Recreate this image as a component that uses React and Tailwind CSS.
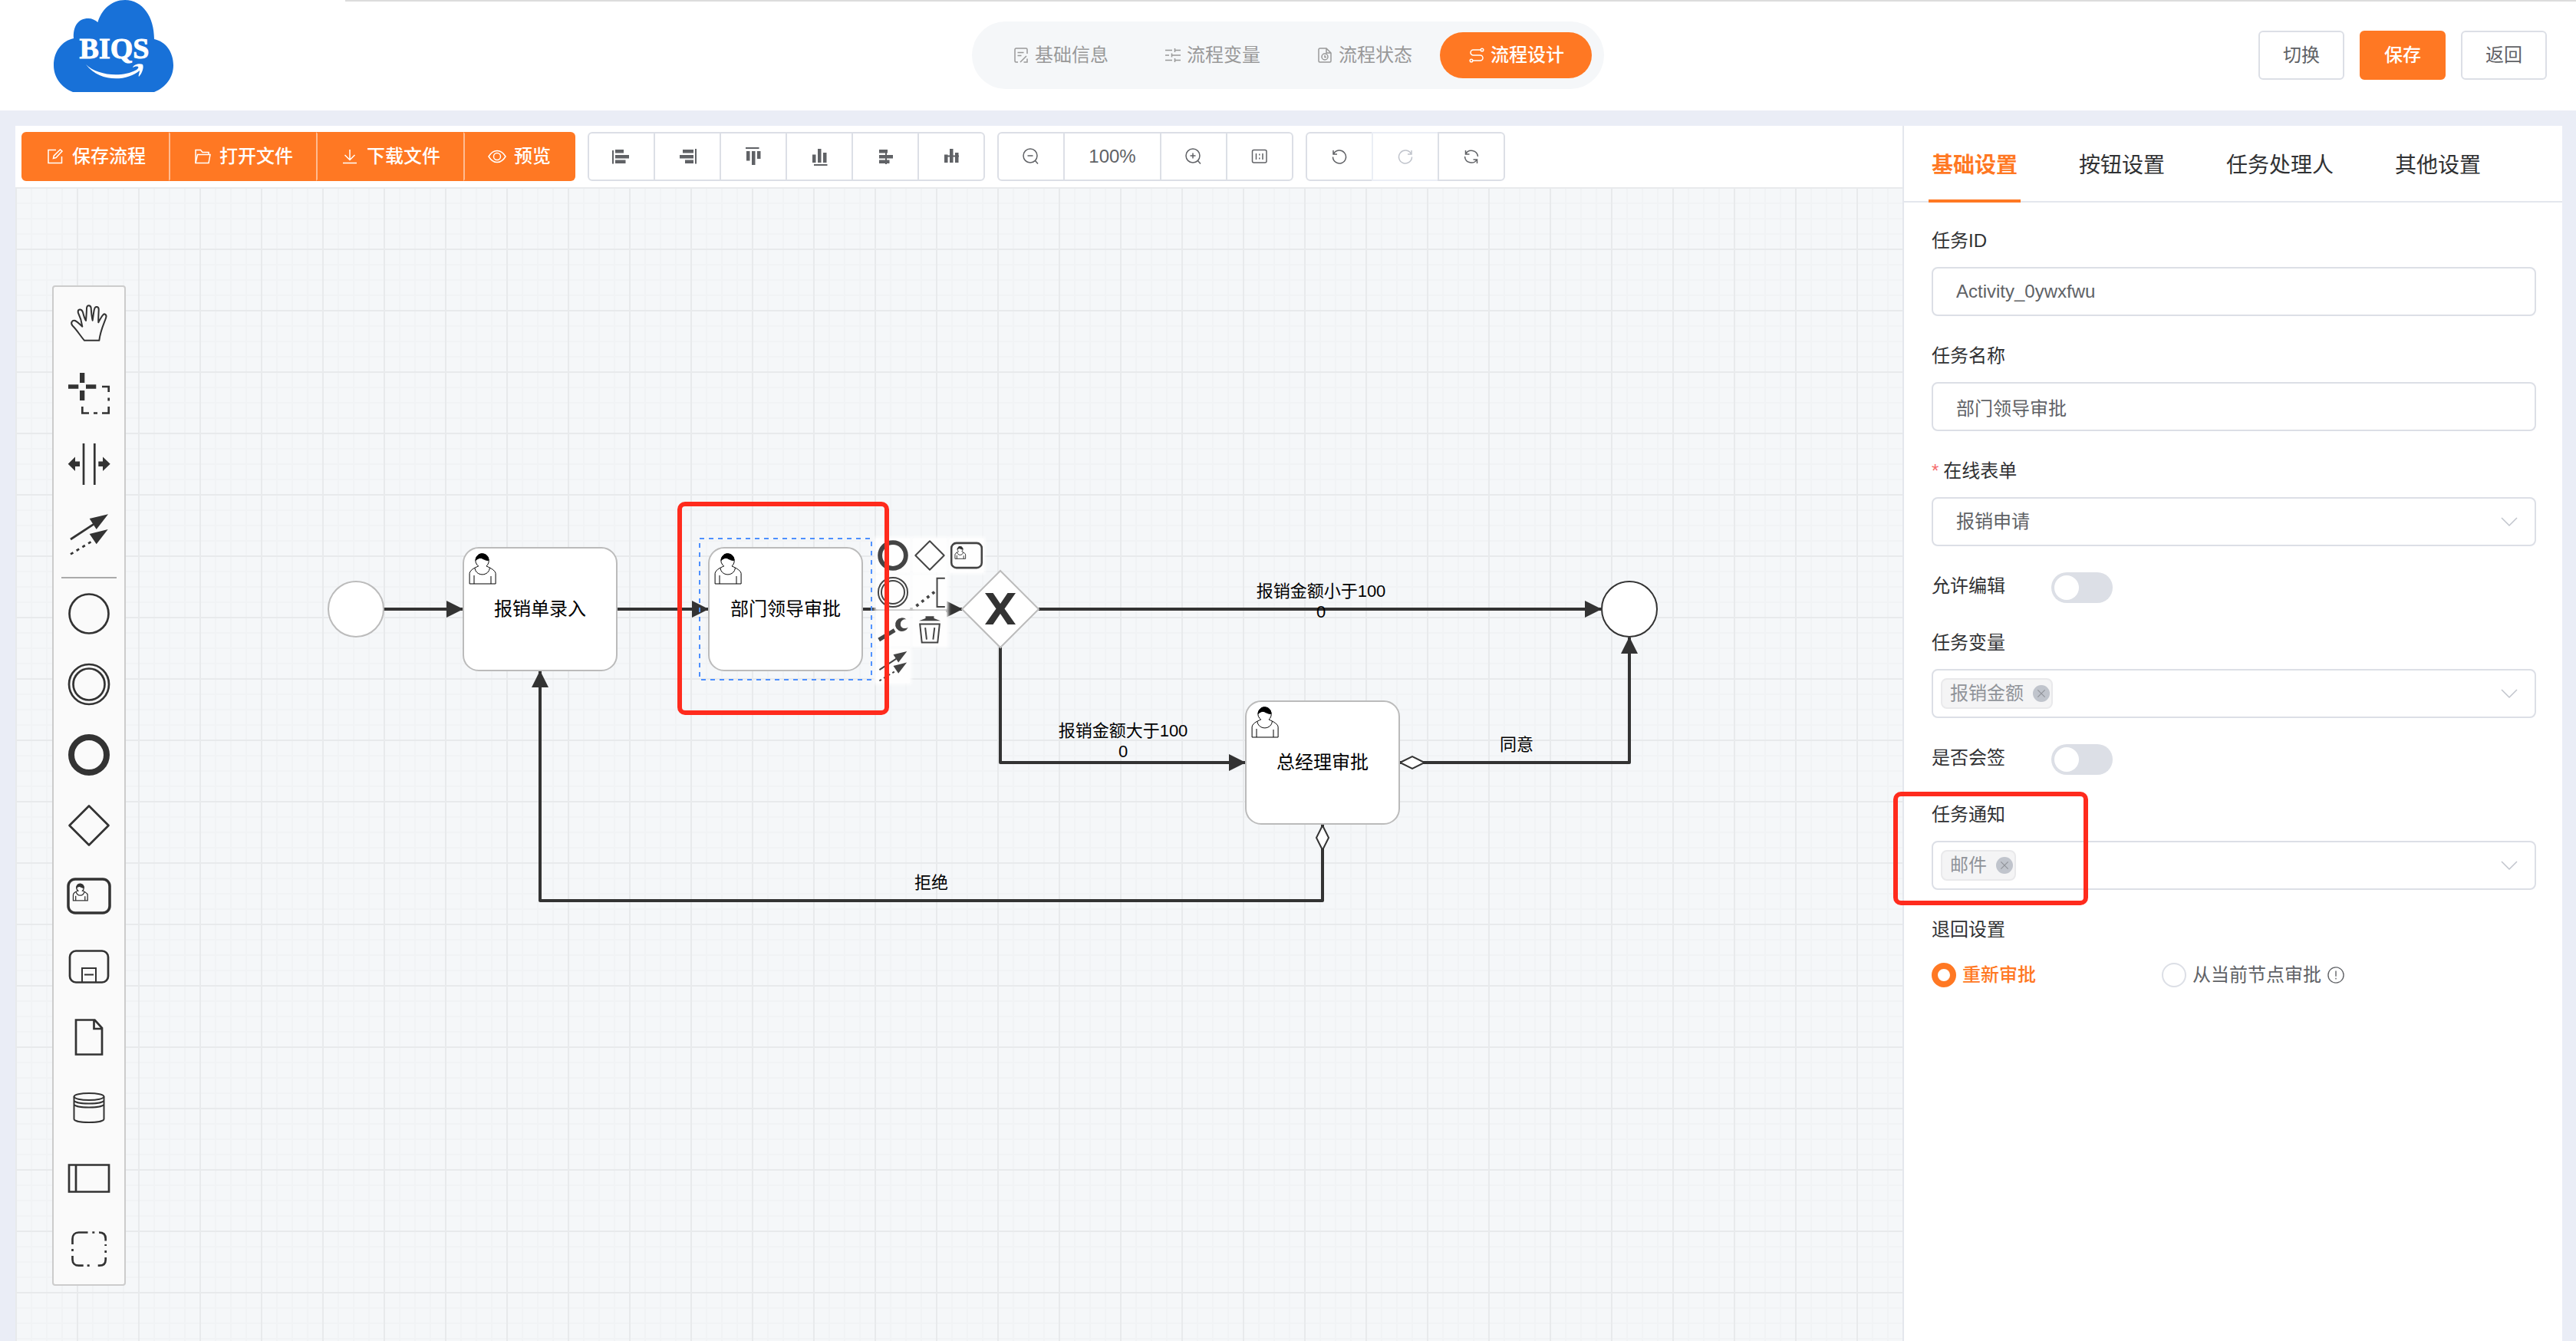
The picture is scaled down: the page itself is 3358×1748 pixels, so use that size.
import { useState } from 'react';
import clsx from 'clsx';

const Icon = ({ children, className = 'size-6', box = 24, stroke = 1.5 }) => (
  <svg
    viewBox={`0 0 ${box} ${box}`}
    className={clsx('shrink-0', className)}
    fill="none"
    stroke="currentColor"
    strokeWidth={stroke}
    aria-hidden="true"
  >
    {children}
  </svg>
);

const fill = { fill: 'currentColor', stroke: 'none' };

// small 24px icons for the header and toolbar
const icons = {
  info: (
    <>
      <path d="M20 10V4.500a1.500 1.500 0 0 0-1.500-1.500h-13A1.500 1.500 0 0 0 4 4.500v15A1.500 1.500 0 0 0 5.500 21H8" />
      <path d="M7.500 8.500h8M7.500 12.500h5M11 21l8-8M15.500 21H20v-4.500" />
    </>
  ),
  sliders: (
    <path d="M2 5.500h9M15 5.500h7M14.500 3v5M2 12h5M11 12h11M10.500 9.500v5M2 18.500h9M15 18.500h7M14.500 16v5" />
  ),
  status: (
    <>
      <path d="M14 3H5.500A1.500 1.500 0 0 0 4 4.500v15A1.500 1.500 0 0 0 5.500 21h13a1.500 1.500 0 0 0 1.500-1.500V9zM14 3v6h6" />
      <circle cx="12" cy="14" r="4" />
      <path d="M12 12v2.500h2" />
    </>
  ),
  flow: (
    <>
      <path d="M17 5H7.500a3.500 3.500 0 0 0 0 7h9a3.500 3.500 0 0 1 0 7H7" />
      <circle cx="19" cy="5" r="1.800" />
      <circle cx="5" cy="19" r="1.800" />
    </>
  ),
  edit: (
    <>
      <path d="M13 3.500H3v17h17.500V12" />
      <path d="M9.500 14.500l.8-3.500L18.500 3l2.500 2-8 8.500z" />
    </>
  ),
  folder: (
    <>
      <path d="M3 20.500v-17h6.500l2.500 3h8v3" />
      <path d="M3 20.500l2.500-11H22l-2 11z" />
    </>
  ),
  download: <path d="M12 3v13.500M5.500 10l6.500 6.500 6.500-6.500M3 20.500h18" />,
  view: (
    <>
      <path d="M1 12c3-5 6.500-7.500 11-7.500S20 7 23 12c-3 5-6.500 7.500-11 7.500S4 17 1 12z" />
      <circle cx="12" cy="12" r="4.500" />
    </>
  ),
  alignLeft: (
    <g {...fill}>
      <path d="M0 4h2v17.500H0zM4 3h11v4.500H4zM4 10h18v4.500H4zM4 16.500h13.500V21H4z" />
    </g>
  ),
  alignRight: (
    <g {...fill}>
      <path d="M22 2h2v19.500h-2zM6 3h14v4.500H6zM2 10h18v4.500H2zM9 16.500h11V21H9z" />
    </g>
  ),
  alignTop: (
    <g {...fill}>
      <path d="M2 0h17.500v2H2zM3 5h4.500v12.500H3zM10 5h4.500v18H10zM17 5h4.500v10H17z" />
    </g>
  ),
  alignBottom: (
    <g {...fill}>
      <path d="M5 22h17.500v2H5zM3 9.500h4.500V20H3zM10 2h4.500v18H10zM17 7h4.500v13H17z" />
    </g>
  ),
  alignCenter: (
    <g {...fill}>
      <path d="M12 3h2v19h-2zM4 3h11v4.500H4zM4 10h18v4.500H4zM4 16.500h13.500V21H4z" />
    </g>
  ),
  alignMiddle: (
    <g {...fill}>
      <path d="M3 10.500h19v2H3zM3 9.500h4.500V20H3zM10 2h4.500v18H10zM17 7h4.500v13H17z" />
    </g>
  ),
  zoomOut: (
    <>
      <circle cx="11" cy="11" r="9" />
      <path d="M7.500 11h7M17.500 17.500l3.500 4" />
    </>
  ),
  zoomIn: (
    <>
      <circle cx="11" cy="11" r="9" />
      <path d="M7.500 11h7M11 7.500v7M17.500 17.500l3.500 4" />
    </>
  ),
  ratio: (
    <>
      <rect x="2.500" y="3.500" width="18.500" height="16.500" rx="2" />
      <path d="M7.500 8v8M16 8v8M11.800 8.500v2M11.800 13.500v2" />
    </>
  ),
  undo: <path d="M4 4v5h5M4.500 8.500A8.500 8.500 0 1 1 3.500 12.500" />,
  redo: <path d="M20 4v5h-5M19.500 8.500A8.500 8.500 0 1 0 20.500 12.500" />,
  refresh: (
    <path d="M4.500 4v5h5M4.500 9A8.500 8.500 0 0 1 20.500 12M19.500 21v-5h-5M19.500 15.500A8.500 8.500 0 0 1 3.500 12" />
  ),
};

// user figure that marks a user task, one unit is two canvas pixels
const UserMark = ({ color = '#000', width = 0.5 }) => (
  <g stroke={color} strokeWidth={width} fill="#fff">
    <path d="m15,12 c0.909,-0.845 1.594,-2.049 1.594,-3.385 0,-2.554 -1.805,-4.622 -4.357,-4.622 -2.552,0 -4.288,2.068 -4.288,4.622 0,1.348 0.974,2.562 1.896,3.405 -0.529,0.187 -5.669,2.097 -5.794,4.756 v6.718 h17 v-6.718 c0,-2.298 -5.528,-4.595 -6.051,-4.776zm-8,6 l0,5.5 m11,0 l0,-5" />
    <path d="m15,12 m2.162,1.009 c0,2.447 -2.158,4.431 -4.821,4.431 -2.663,0 -4.822,-1.981 -4.822,-4.431" />
    <path
      fill={color}
      d="m15,12 m-6.9,-3.8 c0,0 2.251,-2.358 4.274,-1.177 2.024,1.181 4.221,1.537 4.124,0.965 -0.098,-0.57 -0.117,-3.791 -4.191,-4.136 -3.572,0.001 -4.208,3.367 -4.207,4.348z"
    />
  </g>
);

// bpmn glyphs on a 60 unit box, shared by the palette and the context pad
const glyphs = {
  hand: (
    <path
      strokeWidth="2"
      strokeLinejoin="round"
      d="M24 53.800C18 47 15 41 8.500 34.500C5.500 31 8 27 12 28C16 30 18 33 21.300 35.700C20.500 29 18 22 15.800 17.500C15 13 20 11.500 22 17C23 21 24 25 26 28C26.500 22 27 16 27 11.500C27.500 7 32 7 32.700 11.500C33 17 33.500 23 34.700 27.700C35.500 22 36 17 37 13C38 8.500 43 9 42.700 14C42.500 20 42 25 42.300 30.200C44 27 46 23 48 20.800C50 18 53.500 20 52.200 24C50 31 45 40 43.300 53.800z"
    />
  ),
  lasso: (
    <>
      <path {...fill} d="M3 19.300h13.300v5.500H3zM26 19.300h13.300v5.500H26zM18 4h6.300v13H18zM18 27h6.300v13H18z" />
      <path d="M47 22h8.700v7M55.700 36.500v4M55.700 48v8.500H47M41 56.500h-5M30 56.500h-8.700V48" />
    </>
  ),
  space: (
    <>
      <path d="M23 4v54M37.300 4v54" />
      <path
        {...fill}
        d="M2.700 30.800L12 21.500v6h6v6.500h-6v6zM57.700 30.800L48 21.500v6h-5.700v6.500H48v6z"
      />
    </>
  ),
  connect: (
    <>
      <path d="M6 37L36 17.300" />
      <path strokeDasharray="4 5" d="M6 56.400L33 40" />
      <path {...fill} d="M30.700 10L55 4.200L39.700 24zM30.700 29.900L54.700 24L39.700 43.300z" />
    </>
  ),
  start: <circle cx="30" cy="30" r="25.500" />,
  intermediate: (
    <>
      <circle cx="30" cy="30" r="26" />
      <circle cx="30" cy="30" r="20.500" />
    </>
  ),
  end: <circle cx="30" cy="30" r="23" strokeWidth="8" />,
  gateway: <path strokeLinejoin="round" d="M30 4.500L55.500 30L30 55.500L4.500 30z" />,
  task: (
    <>
      <rect x="3" y="8" width="54" height="44" rx="9" strokeWidth="3.500" />
      <g transform="translate(5 10) scale(1.100)">
        <UserMark color="#333" width={1.2} />
      </g>
    </>
  ),
  subprocess: (
    <>
      <rect x="5" y="9.500" width="50" height="41" rx="8" />
      <path strokeWidth="2" d="M21 50V32h18v18M24 40.500h12" />
    </>
  ),
  data: <path d="M13 7.500h24.500L47 18v34.500H13zM36.500 7.500V19H47" />,
  store: (
    <>
      <ellipse cx="30" cy="15.500" rx="19.500" ry="4.500" strokeWidth="2" />
      <path
        strokeWidth="2"
        d="M10.500 15.500v29c0 6 39 6 39 0v-29M10.500 20c0 6 39 6 39 0M10.500 25c0 6 39 6 39 0"
      />
    </>
  ),
  pool: <path d="M4 12.500h52v35H4zM13 12.500v35" />,
  group: (
    <path d="M8.500 24v-7c0-5 3-8.500 8-8.500h12M34.300 8.500h3M43 8.500c6 0 8.700 3 8.700 8v3M51.700 24v2M51.700 32v3M51.700 41v3c0 5-3 7.700-8 7.700h-2M30.700 51.700h-3M22.700 51.700h-6c-5 0-8.200-3-8.200-8V39M8.500 33v-3" />
  ),
  annotation: (
    <>
      <path d="M57 5H43v51h14" />
      <path strokeWidth="5" strokeDasharray="5 7" d="M6 54.500L39 29" />
    </>
  ),
  wrench: (
    <>
      <path strokeWidth="7" d="M5 49L33 32" />
      <path {...fill} d="M54 13A12 12 0 1 0 57 27C50 31 43 27 43.500 21C44 14 50 12 54 13z" />
    </>
  ),
  trash: (
    <>
      <path {...fill} d="M11 15.500L22.500 11V7.300h15V11L49 15.500z" />
      <path d="M12.500 21h35L44 54H16zM22 27.500l2.500 21M38.500 27.500l-2.500 21" />
    </>
  ),
};

const steps = [
  { key: 'info', label: '基础信息' },
  { key: 'sliders', label: '流程变量' },
  { key: 'status', label: '流程状态' },
  { key: 'flow', label: '流程设计' },
];

const fileActions = [
  { key: 'edit', label: '保存流程' },
  { key: 'folder', label: '打开文件' },
  { key: 'download', label: '下载文件' },
  { key: 'view', label: '预览' },
];

const alignActions = [
  ['alignLeft', '左对齐'],
  ['alignRight', '右对齐'],
  ['alignTop', '上对齐'],
  ['alignBottom', '下对齐'],
  ['alignCenter', '水平居中'],
  ['alignMiddle', '垂直居中'],
];

const paletteTools = ['hand', 'lasso', 'space', 'connect'];
const paletteShapes = [
  'start', 'intermediate', 'end', 'gateway', 'task',
  'subprocess', 'data', 'store', 'pool', 'group',
];
const padRows = [
  ['end', 'gateway', 'task'],
  ['intermediate', 'annotation'],
  ['wrench', 'trash'],
  ['connect'],
];

const Logo = () => (
  <svg viewBox="0 0 156 120" className="w-[156px] h-[120px]" role="img" aria-label="BIQS">
    <path
      fill="#1871d8"
      d="M25 120C10 114 0 101 0 85C0 67 11 53 26 50C25 34 32 24 45 24C50 24 54 26 57.500 29C62 13 75 0 93 0C116 0 131 22 131 51C146 54 156 68 156 85C156 101 146 114 131 120z"
    />
    <text
      x="79"
      y="76"
      textAnchor="middle"
      fill="#fff"
      stroke="#fff"
      strokeWidth="1"
      className="font-['Liberation_Serif',serif] font-bold text-[38px]"
    >
      BIQS
    </text>
    <path
      fill="#fff"
      d="M42 84C56 98 88 102 108 91C110 89 111 88 110 87C108 86 105 87 103 88C104 84 112 82 116 84C118 88 115 96 111 100C110 98 112 95 112 92C96 106 60 108 42 84z"
    />
  </svg>
);

const PlainButton = ({ children, className, ...rest }) => (
  <button
    type="button"
    className={clsx(
      'h-16 border-2 flex items-center justify-center text-2xl',
      className
    )}
    {...rest}
  >
    {children}
  </button>
);

const toolButton =
  'w-[88px] -ml-0.5 first:ml-0 first:rounded-l-md last:rounded-r-md bg-white border-[#dcdfe6] text-[#606266]';

const Toolbar = ({ zoom, setZoom }) => (
  <div className="h-20 bg-white px-2 flex items-center gap-4">
    <div className="flex">
      {fileActions.map(({ key, label }) => (
        <PlainButton
          key={key}
          className="px-[30px] gap-2.5 -ml-0.5 first:ml-0 first:rounded-l-md last:rounded-r-md bg-[#ff7823] text-white font-medium border-[#ff7823] not-first:border-l-[#ffbb91]"
        >
          <Icon>{icons[key]}</Icon>
          {label}
        </PlainButton>
      ))}
    </div>

    <div className="flex">
      {alignActions.map(([key, label]) => (
        <PlainButton key={key} className={toolButton} aria-label={label}>
          <Icon>{icons[key]}</Icon>
        </PlainButton>
      ))}
    </div>

    <div className="flex">
      <PlainButton className={toolButton} aria-label="缩小" onClick={() => setZoom(zoom - 10)}>
        <Icon>{icons.zoomOut}</Icon>
      </PlainButton>
      <PlainButton
        className="w-32 -ml-0.5 bg-white border-[#dcdfe6] text-[#606266] font-medium"
        onClick={() => setZoom(100)}
      >
        {zoom}%
      </PlainButton>
      <PlainButton className={toolButton} aria-label="放大" onClick={() => setZoom(zoom + 10)}>
        <Icon>{icons.zoomIn}</Icon>
      </PlainButton>
      <PlainButton className={toolButton} aria-label="还原" onClick={() => setZoom(100)}>
        <Icon>{icons.ratio}</Icon>
      </PlainButton>
    </div>

    <div className="flex">
      <PlainButton className={toolButton} aria-label="撤销">
        <Icon>{icons.undo}</Icon>
      </PlainButton>
      <PlainButton
        className="w-[88px] -ml-0.5 bg-white border-[#ebeef5] text-[#c0c4cc]"
        aria-label="恢复"
        disabled
      >
        <Icon>{icons.redo}</Icon>
      </PlainButton>
      <PlainButton className={toolButton} aria-label="重新绘制">
        <Icon>{icons.refresh}</Icon>
      </PlainButton>
    </div>
  </div>
);

const Task = ({ x, y, label }) => (
  <g transform={`translate(${x} ${y})`}>
    <rect width="200" height="160" rx="20" fill="#fff" stroke="#bbb" strokeWidth="2" />
    <g transform="scale(2)">
      <UserMark />
    </g>
    <text x="100" y="88" textAnchor="middle" className="text-2xl">
      {label}
    </text>
  </g>
);

const FlowLabel = ({ x, y, lines }) => (
  <text textAnchor="middle" className="text-[22px]">
    {lines.map((line, i) => (
      <tspan key={i} x={x} y={y + i * 27}>
        {line}
      </tspan>
    ))}
  </text>
);

const Diagram = () => (
  <svg className="absolute inset-0 size-full" fill="#000">
    <defs>
      <marker
        id="arrow"
        viewBox="0 0 22 22"
        refX="21"
        refY="11"
        markerWidth="22"
        markerHeight="22"
        markerUnits="userSpaceOnUse"
        orient="auto"
      >
        <path d="M0 0L22 11L0 22z" fill="#333" />
      </marker>
    </defs>

    <g fill="none" stroke="#333" strokeWidth="4" strokeLinejoin="round">
      <path d="M480 550H583" markerEnd="url(#arrow)" />
      <path d="M784 550H903" markerEnd="url(#arrow)" />
      <path d="M1104 550H1234" markerEnd="url(#arrow)" />
      <path d="M1334 550H2067" markerEnd="url(#arrow)" />
      <path d="M1284 600V750H1603" markerEnd="url(#arrow)" />
      <path d="M1804 750H2104V587" markerEnd="url(#arrow)" />
      <path d="M1704 830V930H684V631" markerEnd="url(#arrow)" />
    </g>

    {/* conditional flow markers */}
    <g fill="#fff" stroke="#333" strokeWidth="2">
      <path d="M1805 750l16-8 16 8-16 8z" />
      <path d="M1704 832l8 16-8 16-8-16z" />
    </g>

    <circle cx="444" cy="550" r="36" fill="#fff" stroke="#bbb" strokeWidth="2" />
    <circle cx="2104" cy="550" r="36" fill="#fff" stroke="#333" strokeWidth="2" />
    <Task x={584} y={470} label="报销单录入" />
    <Task x={904} y={470} label="部门领导审批" />
    <Task x={1604} y={670} label="总经理审批" />

    <path d="M1284 500l50 50-50 50-50-50z" fill="#fff" stroke="#bbb" strokeWidth="2" />
    <path
      fill="#333"
      d="M1264 529h10.500l9.500 14 9.500-14h10.500l-14.500 20.500 14.500 20.500h-10.500l-9.500-14-9.500 14h-10.500l14.500-20.500z"
    />

    <FlowLabel x={1702} y={534} lines={['报销金额小于100', '0']} />
    <FlowLabel x={1444} y={716} lines={['报销金额大于100', '0']} />
    <FlowLabel x={1957} y={734} lines={['同意']} />
    <FlowLabel x={1194} y={914} lines={['拒绝']} />

    <rect
      x="892"
      y="458"
      width="224"
      height="184"
      fill="none"
      stroke="#4d90ff"
      strokeWidth="2"
      strokeDasharray="6 6"
    />
  </svg>
);

const PaletteEntry = ({ name }) => (
  <button type="button" aria-label={name} className="size-[92px] flex items-center justify-center">
    <Icon box={60} stroke={2.7} className="size-[60px]">
      {glyphs[name]}
    </Icon>
  </button>
);

const Palette = () => (
  <div className="absolute left-12 top-32 w-24 border-2 border-[#ccc] rounded bg-[#fafafa] text-[#333]">
    {paletteTools.map((name) => (
      <PaletteEntry key={name} name={name} />
    ))}
    <hr className="mx-2.5 mt-2.5 border-0 h-0.5 bg-[#aaa]" />
    {paletteShapes.map((name) => (
      <PaletteEntry key={name} name={name} />
    ))}
  </div>
);

const ContextPad = () => (
  <div className="absolute left-[1122px] top-[458px] flex flex-col gap-1 text-[#444]">
    {padRows.map((row, i) => (
      <div key={i} className="flex gap-1">
        {row.map((name) => (
          <button
            key={name}
            type="button"
            aria-label={name}
            className="size-11 bg-[#fefefe] shadow-[0_0_4px_2px_#fefefe]"
          >
            <Icon box={60} stroke={2.7} className="size-11">
              {glyphs[name]}
            </Icon>
          </button>
        ))}
      </div>
    ))}
  </div>
);

const Canvas = () => (
  <div className="relative flex-1 overflow-hidden bg-[#f5f7f9] bg-[linear-gradient(to_right,#e8eaec_2px,transparent_2px),linear-gradient(to_bottom,#e8eaec_2px,transparent_2px),linear-gradient(to_right,#f1f3f5_2px,transparent_2px),linear-gradient(to_bottom,#f1f3f5_2px,transparent_2px)] [background-size:80px_80px,80px_80px,20px_20px,20px_20px]">
    <Diagram />
    <Palette />
    <ContextPad />
    <div className="absolute left-[863px] top-[410px] w-[276px] h-[278px] border-6 border-[#ff2b1d] rounded-[10px] pointer-events-none" />
  </div>
);

const fieldBox = 'w-full h-16 border-2 border-[#dcdfe6] rounded-lg bg-white text-2xl text-[#606266]';

const Field = ({ id, label, required, children }) => (
  <div className="mb-8">
    <label htmlFor={id} className="block mb-3.5 text-2xl leading-10">
      {required && <span className="text-[#f56c6c] mr-1.5">*</span>}
      {label}
    </label>
    {children}
  </div>
);

const Chevron = () => (
  <Icon className="absolute right-[23px] top-5 size-6 text-[#c0c4cc] pointer-events-none">
    <path d="M2 7l10 10L22 7" />
  </Icon>
);

const TagSelect = ({ id, tags, onRemove }) => (
  <div className="relative">
    <select id={id} className={clsx(fieldBox, 'appearance-none')} defaultValue="">
      <option value=""></option>
    </select>
    <div className="absolute left-3 top-3 flex gap-3">
      {tags.map((tag) => (
        <span
          key={tag}
          className="h-10 pl-2.5 pr-0.5 flex items-center gap-3 border-2 border-[#e9e9eb] rounded-lg bg-[#f4f4f5] text-2xl text-[#909399]"
        >
          {tag}
          <button
            type="button"
            aria-label={`移除${tag}`}
            className="size-[22px] rounded-full bg-[#c0c4cc] flex items-center justify-center"
            onClick={() => onRemove(tag)}
          >
            <Icon className="size-3.5" stroke={2}>
              <path d="M4 4l16 16M20 4L4 20" />
            </Icon>
          </button>
        </span>
      ))}
    </div>
    <Chevron />
  </div>
);

const SwitchRow = ({ id, label }) => (
  <div className="mb-8 h-[42px] flex items-start">
    <label htmlFor={id} className="w-[156px] text-2xl leading-10">
      {label}
    </label>
    <input
      id={id}
      type="checkbox"
      role="switch"
      className="appearance-none self-end w-20 h-10 p-1 rounded-full bg-[#dcdfe6] before:block before:size-8 before:rounded-full before:bg-white before:transition checked:bg-[#ff7823] checked:before:translate-x-10"
    />
  </div>
);

const panelTabs = ['基础设置', '按钮设置', '任务处理人', '其他设置'];

const SettingsPanel = () => {
  const [tab, setTab] = useState('基础设置');
  const [variables, setVariables] = useState(['报销金额']);
  const [notices, setNotices] = useState(['邮件']);
  const [back, setBack] = useState('restart');

  const backOptions = [
    { value: 'restart', label: '重新审批' },
    { value: 'current', label: '从当前节点审批', hint: true },
  ];

  return (
    <aside className="w-[860px] shrink-0 bg-white border-l-2 border-[#e4e7ed] text-[#303133]">
      <nav className="h-[100px] px-8 flex gap-[72px] border-b-2 border-[#e4e7ed]">
        {panelTabs.map((name) => (
          <button
            key={name}
            type="button"
            onClick={() => setTab(name)}
            className={clsx(
              'h-[100px] px-1 pt-2 border-b-4 text-[28px]',
              tab === name ? 'border-[#ff7823] text-[#ff7823] font-bold' : 'border-transparent'
            )}
          >
            {name}
          </button>
        ))}
      </nav>

      <form className="pl-9 pr-[34px] pt-[30px]" onSubmit={(e) => e.preventDefault()}>
        <Field id="taskId" label="任务ID">
          <input id="taskId" type="text" defaultValue="Activity_0ywxfwu" className={clsx(fieldBox, 'px-[30px]')} />
        </Field>
        <Field id="taskName" label="任务名称">
          <input id="taskName" type="text" defaultValue="部门领导审批" className={clsx(fieldBox, 'px-[30px]')} />
        </Field>
        <Field id="onlineForm" label="在线表单" required>
          <div className="relative">
            <select id="onlineForm" className={clsx(fieldBox, 'px-[30px] appearance-none')}>
              <option>报销申请</option>
            </select>
            <Chevron />
          </div>
        </Field>
        <SwitchRow id="allowEdit" label="允许编辑" />
        <Field id="variables" label="任务变量">
          <TagSelect
            id="variables"
            tags={variables}
            onRemove={(tag) => setVariables(variables.filter((t) => t !== tag))}
          />
        </Field>
        <SwitchRow id="countersign" label="是否会签" />
        <div className="relative">
          <Field id="notices" label="任务通知">
            <TagSelect
              id="notices"
              tags={notices}
              onRemove={(tag) => setNotices(notices.filter((t) => t !== tag))}
            />
          </Field>
          <div className="absolute -left-[50px] -top-2.5 w-[254px] h-[148px] border-6 border-[#ff2b1d] rounded-[10px] pointer-events-none" />
        </div>

        <fieldset>
          <legend className="mb-3.5 text-2xl leading-10">退回设置</legend>
          <div className="flex h-[50px] items-center">
            {backOptions.map(({ value, label, hint }) => (
              <label
                key={value}
                className={clsx(
                  'flex items-center gap-2 min-w-[300px] text-2xl',
                  back === value ? 'text-[#ff7823] font-medium' : 'text-[#606266]'
                )}
              >
                <input
                  type="radio"
                  name="back"
                  checked={back === value}
                  onChange={() => setBack(value)}
                  className="appearance-none size-8 rounded-full border-2 border-[#dcdfe6] checked:border-8 checked:border-[#ff7823]"
                />
                {label}
                {hint && (
                  <Icon className="size-[22px]">
                    <circle cx="12" cy="12" r="11" />
                    <path d="M12 6v8M12 16v2" />
                  </Icon>
                )}
              </label>
            ))}
          </div>
        </fieldset>
      </form>
    </aside>
  );
};

const App = () => {
  const [step, setStep] = useState('flow');
  const [zoom, setZoom] = useState(100);

  return (
    <div className="min-h-screen flex flex-col bg-[#eaedf6] font-['Liberation_Sans','Noto_Sans_CJK_SC',sans-serif]">
      <header className="relative h-36 bg-white grid grid-cols-[1fr_auto_1fr] items-center">
        <div className="absolute left-[450px] right-0 top-0 h-0.5 bg-[#dcdcdc]" />
        <div className="self-start pl-[70px]">
          <Logo />
        </div>

        <nav className="px-4 py-3.5 flex rounded-full bg-[#f5f7f9]">
          {steps.map(({ key, label }) => (
            <button
              key={key}
              type="button"
              onClick={() => setStep(key)}
              className={clsx(
                'h-[60px] px-9 flex items-center gap-1.5 rounded-full text-2xl',
                step === key ? 'bg-[#ff7823] text-white font-medium' : 'text-[#999]'
              )}
            >
              <Icon>{icons[key]}</Icon>
              {label}
            </button>
          ))}
        </nav>

        <div className="flex justify-end gap-5 pr-[38px]">
          <PlainButton className="px-[30px] rounded-md border-[#dcdfe6] text-[#606266]">切换</PlainButton>
          <PlainButton className="px-[30px] rounded-md border-[#ff7823] bg-[#ff7823] text-white font-medium">
            保存
          </PlainButton>
          <PlainButton className="px-[30px] rounded-md border-[#dcdfe6] text-[#606266]">返回</PlainButton>
        </div>
      </header>

      <main className="flex-1 flex mt-5 pl-5 pr-[18px]">
        <section className="flex-1 min-w-0 flex flex-col">
          <Toolbar zoom={zoom} setZoom={setZoom} />
          <Canvas />
        </section>
        <SettingsPanel />
      </main>
    </div>
  );
};

export default App;
